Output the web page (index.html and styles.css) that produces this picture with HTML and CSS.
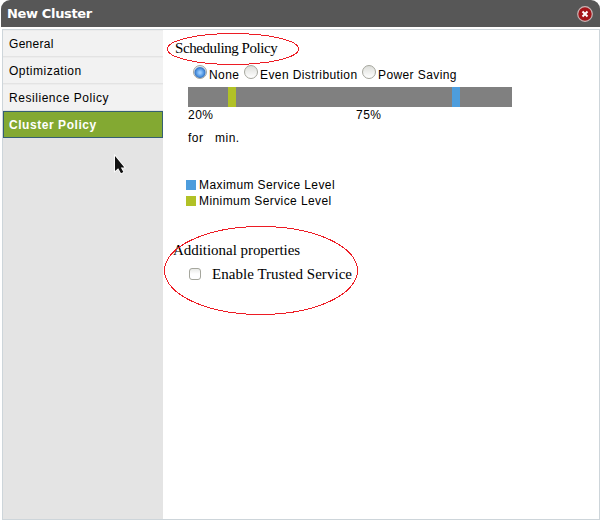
FILE: index.html
```
<!DOCTYPE html>
<html lang="en">
<head>
<meta charset="utf-8">
<title>New Cluster</title>
<link rel="stylesheet" href="styles.css">
</head>
<body>
<div class="dialog">
  <header class="titlebar">
    <h1 class="title">New Cluster</h1>
    <svg class="close" width="16" height="16" viewBox="0 0 16 16"><circle cx="8" cy="8" r="7.3" fill="#a4161a" stroke="#c9b5b5" stroke-width="1.2"/><path d="M5.5 5.5l5 5M10.5 5.5l-5 5" stroke="#fff" stroke-width="2"/></svg>
  </header>
  <div class="frame">
    <nav class="tabs">
      <div class="tab"><span class="t-general">General</span></div>
      <div class="tab"><span class="t-optimization">Optimization</span></div>
      <div class="tab"><span class="t-resilience">Resilience Policy</span></div>
      <div class="tab active"><span class="t-cluster">Cluster Policy</span></div>
    </nav>
    <main class="content">
      <h2 class="heading scheduling">Scheduling Policy</h2>
      <div class="radios">
        <span class="radio checked"></span><label class="r-none">None</label>
        <span class="radio"></span><label class="r-even">Even Distribution</label>
        <span class="radio"></span><label class="r-power">Power Saving</label>
      </div>
      <div class="bar"><i class="mark min"></i><i class="mark max"></i></div>
      <div class="levels"><span class="low">20%</span><span class="high">75%</span></div>
      <div class="duration"><span class="for">for</span><span class="minutes">min.</span></div>
      <div class="legend">
        <div class="key"><i class="swatch max"></i><span>Maximum Service Level</span></div>
        <div class="key"><i class="swatch min"></i><span>Minimum Service Level</span></div>
      </div>
      <h2 class="heading additional">Additional properties</h2>
      <div class="option"><span class="checkbox"></span><label class="heading trusted">Enable Trusted Service</label></div>
    </main>
  </div>
  <svg class="overlay" width="600" height="520" viewBox="0 0 600 520">
    <g fill="none" stroke="#ed1c24" stroke-width="1" shape-rendering="crispEdges">
      <ellipse cx="233" cy="49" rx="65.5" ry="15.5"/>
      <ellipse cx="261" cy="270.5" rx="96.5" ry="44"/>
    </g>
    <path d="M115 156v15l3.2-2.8 2.8 5 2.4-1.2-2.6-4.6h3.6z" fill="#111" stroke="#fff" stroke-width="1.6" paint-order="stroke"/>
  </svg>
</div>
</body>
</html>
```
FILE: styles.css
```
* { box-sizing: border-box; }
body {
  margin: 0;
  background: #fff;
  color: #000;
  font: 12px/16px "Liberation Sans", Arial, sans-serif;
}
h1, h2 { margin: 0; font-weight: normal; }
span, label { white-space: nowrap; }
.dialog {
  position: relative;
  display: flex;
  flex-direction: column;
  width: 600px;
  height: 520px;
  overflow: hidden;
}
.titlebar {
  display: flex;
  align-items: center;
  justify-content: space-between;
  height: 27px;
  margin-left: 1px;
  padding: 0 7px 0 6px;
  border-radius: 9px 9px 0 0;
  background: #575757;
  color: #fff;
}
.title { font: bold 13px/28px "DejaVu Sans", sans-serif; letter-spacing: -.35px; }
.close { display: block; }
.frame {
  display: flex;
  flex: 1;
  margin: 2px 0 0 2px;
  border: 1px solid #cdd5da;
}
.tabs { width: 160px; background: #e4e4e4; }
.tab {
  height: 27px;
  padding-left: 6px;
  background: #f2f2f2;
  border-top: 1px solid #ececec;
  border-bottom: 1px solid #e3e3e3;
  line-height: 26px;
}
.tab.active {
  background: #83a932;
  border: 1px solid #355f73;
  padding-left: 5px;
  color: #fff;
  font-weight: bold;
}
.t-general { letter-spacing: .3px; }
.t-optimization { letter-spacing: .5px; }
.t-resilience { letter-spacing: .55px; }
.t-cluster { letter-spacing: .55px; }
.content { width: 436px; padding: 9px 0 0 11px; }
.heading { font: 15px/18px "Liberation Serif", "Times New Roman", serif; }
.scheduling { margin-left: 1px; letter-spacing: -.42px; }
.radios {
  display: flex;
  align-items: flex-start;
  height: 19px;
  margin: 7px 0 0 19px;
}
.radios label { padding-top: 3px; letter-spacing: .4px; }
.radios .r-none { width: 35px; margin-left: 2px; }
.radios .r-even { width: 102px; margin-left: 2px; }
.radios .r-power { margin-left: 2px; }
.radio {
  flex: none;
  width: 14px;
  height: 14px;
  margin-top: 1px;
  border: 1px solid #a5a69d;
  border-radius: 50%;
  background: linear-gradient(#dddeda, #fff);
}
.radio.checked { background: radial-gradient(circle at 50% 55%, #9accff 0 10%, #4a91df 45%, #3e78c4 56%, #d9e6f4 68%); }
.bar {
  display: flex;
  width: 324px;
  height: 20px;
  margin: 4px 0 0 14px;
  background: #808080;
}
.mark { width: 8px; }
.min { background: #b1c126; }
.max { background: #4d9ddd; }
.mark.min { margin-left: 40px; }
.mark.max { margin-left: 216px; }
.levels { display: flex; margin-left: 14px; letter-spacing: .5px; }
.low { width: 168px; }
.duration { display: flex; margin: 7px 0 0 14px; letter-spacing: .5px; }
.for { width: 27px; }
.legend { margin: 31px 0 0 12px; letter-spacing: .41px; }
.key { display: flex; align-items: center; height: 16px; }
.swatch { width: 10px; height: 10px; margin-right: 3px; }
.additional { margin: 32px 0 0 -1px; letter-spacing: -.04px; }
.option { display: flex; align-items: center; margin: 6px 0 0 15px; }
.trusted { letter-spacing: .04px; }
.checkbox {
  width: 12px;
  height: 12px;
  margin-right: 11px;
  border: 1px solid #a5a69d;
  border-radius: 3px;
  background: linear-gradient(#e9eae7, #fff 50%);
}
.overlay { position: absolute; left: 0; top: 0; }
```
